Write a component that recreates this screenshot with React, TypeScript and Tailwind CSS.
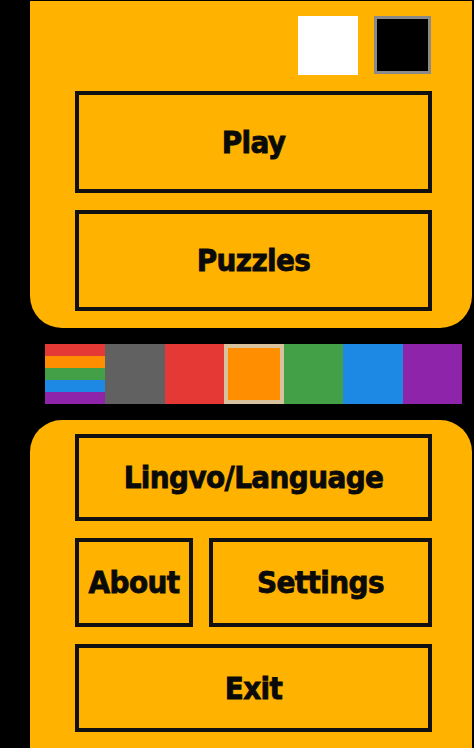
const font = { fontFamily: '"DejaVu Sans Condensed", "DejaVu Sans", sans-serif' };

const swatches = ["#616161", "#e53935", "#ff8f00", "#43a047", "#1e88e5", "#8e24aa"];
const rainbow = ["#e53935", "#ff8f00", "#43a047", "#1e88e5", "#8e24aa"];

function MenuButton({ label, className }: { label: string; className: string }) {
  return (
    <button
      className={`flex items-center justify-center border-[4px] border-[#111] bg-[#ffb300] text-[31px] font-bold tracking-[-0.6px] text-[#0a0a0a] [-webkit-text-stroke:0.8px_#0a0a0a] ${className}`}
      style={font}
    >
      {label}
    </button>
  );
}

export default function App() {
  return (
    <div className="flex h-[748px] w-[474px] flex-col overflow-hidden bg-black">
      {/* Top panel: theme toggles + main actions */}
      <div className="ml-[30px] mr-[2px] mt-[1px] flex h-[327px] flex-col rounded-b-[32px] bg-[#ffb300]">
        <div className="mr-[41px] mt-[15px] flex justify-end gap-[16px]">
          <div className="h-[59px] w-[60px] bg-white" />
          <div className="h-[58px] w-[57px] border-[3px] border-[#8a8a8a] bg-black" />
        </div>
        <div className="ml-[45px] mt-[16px] flex w-[357px] flex-col gap-[17px]">
          <MenuButton label="Play" className="h-[102px]" />
          <MenuButton label="Puzzles" className="h-[101px]" />
        </div>
      </div>

      {/* Colour picker */}
      <div className="ml-[45px] mt-[16px] flex h-[60px] w-[417px]">
        <div className="flex w-[60px] flex-col">
          {rainbow.map((c) => (
            <div key={c} className="flex-1" style={{ backgroundColor: c }} />
          ))}
        </div>
        {swatches.map((c) => (
          <div
            key={c}
            className={`h-full w-[59.5px] ${c === "#ff8f00" ? "border-[4px] border-[#d8c29e]" : ""}`}
            style={{ backgroundColor: c }}
          />
        ))}
      </div>

      {/* Bottom panel: secondary actions */}
      <div className="ml-[30px] mr-[2px] mt-[16px] flex flex-1 flex-col rounded-t-[32px] bg-[#ffb300] pb-[1px]">
        <div className="ml-[45px] mt-[14px] flex w-[357px] flex-col gap-[17px]">
          <MenuButton label="Lingvo/Language" className="h-[87px]" />
          <div className="flex h-[89px] gap-[16px]">
            <MenuButton label="About" className="w-[118px]" />
            <MenuButton label="Settings" className="flex-1" />
          </div>
          <MenuButton label="Exit" className="h-[88px]" />
        </div>
      </div>
    </div>
  );
}
